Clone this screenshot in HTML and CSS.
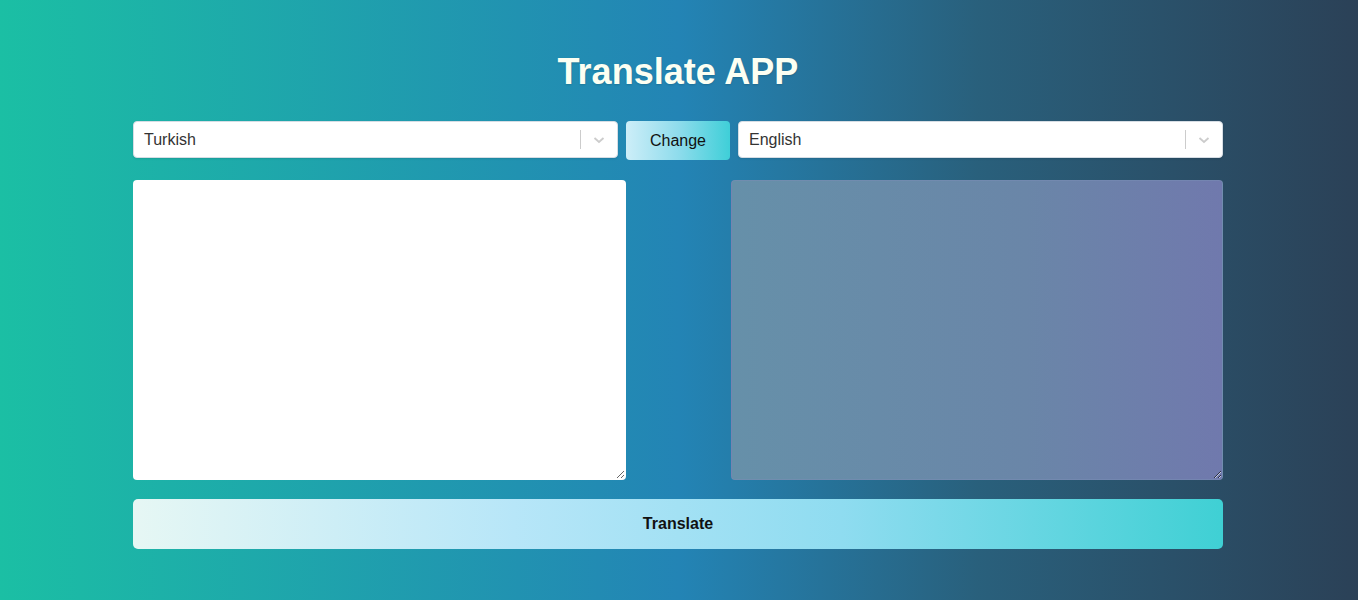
FILE: index.html
```html
<!DOCTYPE html>
<html lang="en">
<head>
<meta charset="utf-8">
<title>Translate APP</title>
<link rel="stylesheet" href="styles.css">
</head>
<body>
<main class="app">
  <h1 class="title">Translate APP</h1>
  <div class="lang-row">
    <div class="select">
      <span class="select-value">Turkish</span>
      <span class="select-sep"></span>
      <svg class="select-chevron" width="20" height="20" viewBox="0 0 20 20"><path d="M5.5 8 10 12 14.5 8" fill="none" stroke="#cccccc" stroke-width="1.8"/></svg>
    </div>
    <button class="change-btn">Change</button>
    <div class="select">
      <span class="select-value">English</span>
      <span class="select-sep"></span>
      <svg class="select-chevron" width="20" height="20" viewBox="0 0 20 20"><path d="M5.5 8 10 12 14.5 8" fill="none" stroke="#cccccc" stroke-width="1.8"/></svg>
    </div>
  </div>
  <div class="text-row">
    <textarea class="box box-source"></textarea>
    <textarea class="box box-target" disabled></textarea>
  </div>
  <button class="translate-btn">Translate</button>
</main>
</body>
</html>
```
FILE: styles.css
```css
html, body {
  margin: 0;
  padding: 0;
}
body {
  min-height: 100vh;
  padding-right: 2px;
  box-sizing: border-box;
  background: linear-gradient(to right, #1bbfa4 0%, #2384b5 50%, #29607c 72%, #2b4157 100%);
  font-family: "Liberation Sans", Arial, sans-serif;
}
.app {
  width: 1090px;
  margin: 0 auto;
  padding-top: 51px;
  display: flex;
  flex-direction: column;
}
.title {
  margin: 0;
  text-align: center;
  font-size: 36px;
  line-height: 42px;
  font-weight: bold;
  color: #fcfff2;
  text-shadow: 0 1px 2px rgba(0, 0, 0, 0.15);
}
.lang-row {
  margin-top: 28px;
  display: flex;
  gap: 8px;
  align-items: flex-start;
}
.select {
  flex: 1;
  height: 37px;
  box-sizing: border-box;
  background: #ffffff;
  border: 1px solid #d6dde4;
  border-radius: 4px;
  display: flex;
  align-items: center;
  padding-left: 10px;
  padding-right: 8px;
  box-shadow: 0 1px 2px rgba(0, 0, 0, 0.1);
}
.select-value {
  flex: 1;
  font-size: 16px;
  color: #333333;
}
.select-sep {
  width: 1px;
  align-self: stretch;
  margin: 8px 8px 8px 0;
  background: #cccccc;
}
.select-chevron {
  display: block;
}
.change-btn {
  width: 104px;
  height: 39px;
  border: none;
  border-radius: 4px;
  background: linear-gradient(to right, #cdeef8 0%, #8fdcec 50%, #3fcfd8 100%);
  font-family: "Liberation Sans", Arial, sans-serif;
  font-size: 16px;
  color: #111111;
  padding: 0;
}
.text-row {
  margin-top: 20px;
  display: flex;
  justify-content: space-between;
}
.box {
  width: 493px;
  height: 300px;
  box-sizing: border-box;
  border: 1px solid rgba(255, 255, 255, 0.4);
  border-radius: 4px;
  padding: 10px;
  font-family: "Liberation Sans", Arial, sans-serif;
  font-size: 16px;
  margin: 0;
}
.box-source {
  background: #ffffff;
}
.box-target {
  width: 492px;
  background: linear-gradient(to right, #6690a9 0%, #6a86a8 60%, #7079ad 100%);
  border-color: rgba(120, 140, 180, 0.6);
}
.translate-btn {
  margin-top: 19px;
  height: 50px;
  border: none;
  border-radius: 5px;
  background: linear-gradient(to right, #e6f7f4 0%, #b7e6f8 35%, #8fdcf0 65%, #3fd0d4 100%);
  font-family: "Liberation Sans", Arial, sans-serif;
  font-size: 16px;
  font-weight: bold;
  color: #111111;
}
```
